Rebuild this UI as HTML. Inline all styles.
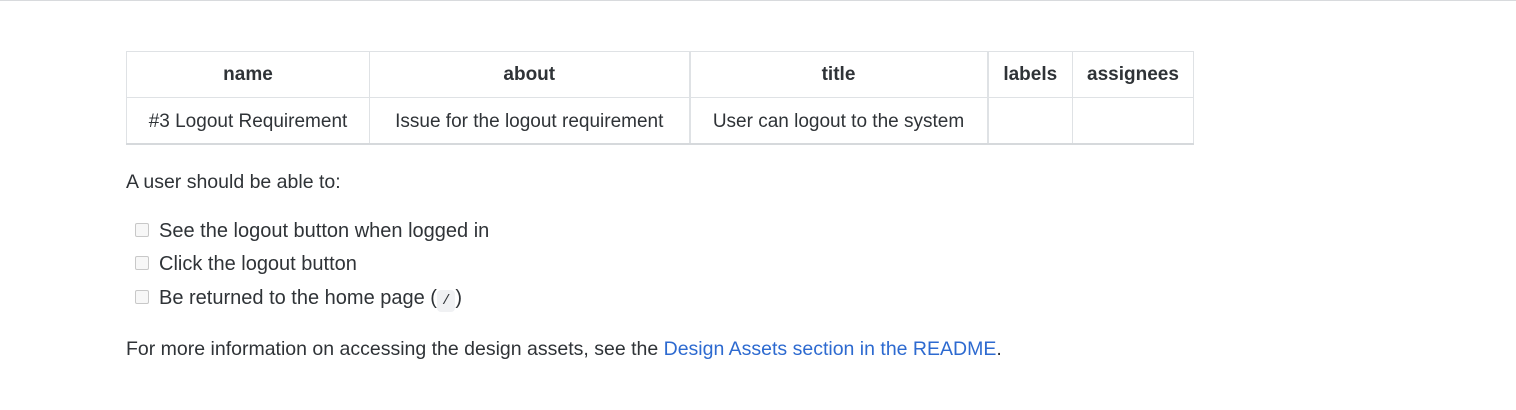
<!DOCTYPE html>
<html><head><meta charset="utf-8"><style>
body{margin:0;width:1516px;height:410px;background:#fff;font-family:"Liberation Sans",sans-serif;color:#2f3337;position:relative;overflow:hidden}
.top{position:absolute;left:0;top:0;width:1516px;height:1px;background:#d8dadd}
table{position:absolute;left:126px;top:51px;border-collapse:collapse;font-size:19px;table-layout:fixed}
td,th{border:1px solid #dfe2e5;height:45px;padding:0;text-align:center;white-space:nowrap;overflow:hidden}
th{font-weight:bold}
td{padding-top:3px;height:42px}
tr:last-child td{border-bottom:2px solid #d6d9dc}
p{position:absolute;left:126px;margin:0;font-size:19.5px}
.cb{position:absolute;left:135px;width:12px;height:12px;border:1px solid #c8c8c8;border-radius:2px;background:#f7f7f7}
.li{position:absolute;left:159px;font-size:20px}
code{font-family:"Liberation Mono",monospace;font-size:14px;background:#f0f1f3;border-radius:4px;padding:3px 5px}
a{color:#2d6ad0;text-decoration:none}
</style></head><body>
<div class="top"></div>
<table>
<col style="width:243px"><col style="width:320px"><col style="width:298px"><col style="width:85px"><col style="width:121px">
<tr><th>name</th><th>about</th><th style="border-left:2px solid #dfe2e5;border-right:2px solid #dfe2e5">title</th><th>labels</th><th>assignees</th></tr>
<tr><td>#3 Logout Requirement</td><td>Issue for the logout requirement</td><td style="border-left:2px solid #dfe2e5;border-right:2px solid #dfe2e5">User can logout to the system</td><td></td><td></td></tr>
</table>
<p style="top:171px">A user should be able to:</p>
<div class="cb" style="top:223px"></div><div class="li" style="top:220px">See the logout button when logged in</div>
<div class="cb" style="top:256px"></div><div class="li" style="top:253px">Click the logout button</div>
<div class="cb" style="top:290px"></div><div class="li" style="top:287px">Be returned to the home page (<code>/</code>)</div>
<p style="top:338px">For more information on accessing the design assets, see the <a>Design Assets section in the README</a>.</p>
</body></html>
